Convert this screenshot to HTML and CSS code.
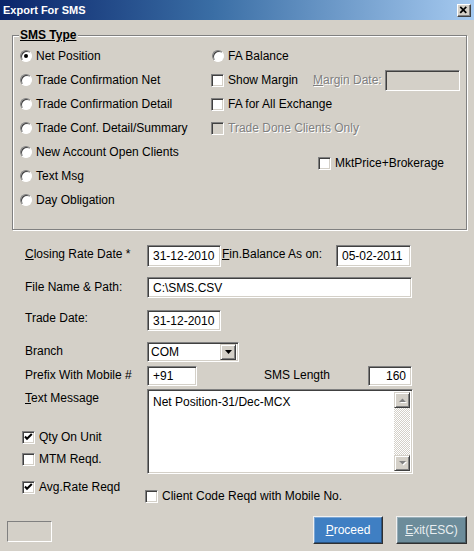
FILE: index.html
```html
<!DOCTYPE html>
<html>
<head>
<meta charset="utf-8">
<link rel="stylesheet" href="styles.css">
</head>
<body>
<div class="window">
  <div class="titlebar">
    <span class="title">Export For SMS</span>
    <span class="close"><svg width="14" height="13" viewBox="0 0 14 13"><path d="M3.5 2.5 L10 9 M10 2.5 L3.5 9" stroke="#000" stroke-width="1.8" fill="none"/></svg></span>
  </div>

  <div class="group">
    <span class="legend">SMS Type</span>
    <div class="col-left">
      <div class="opt"><span class="radio checked"></span>Net Position</div>
      <div class="opt"><span class="radio"></span>Trade Confirmation Net</div>
      <div class="opt"><span class="radio"></span>Trade Confirmation Detail</div>
      <div class="opt"><span class="radio"></span>Trade Conf. Detail/Summary</div>
      <div class="opt"><span class="radio"></span>New Account Open Clients</div>
      <div class="opt"><span class="radio"></span>Text Msg</div>
      <div class="opt"><span class="radio"></span>Day Obligation</div>
    </div>
    <div class="col-right">
      <div class="opt"><span class="radio"></span>FA Balance</div>
      <div class="opt">
        <span class="check"></span><span class="w-show">Show Margin</span>
        <span class="disabled w-mdate"><u>M</u>argin Date:</span>
        <span class="field field-off w-mfield"></span>
      </div>
      <div class="opt"><span class="check"></span>FA for All Exchange</div>
      <div class="opt"><span class="check check-off"></span><span class="disabled">Trade Done Clients Only</span></div>
      <div class="opt opt-mkt"><span class="check"></span>MktPrice+Brokerage</div>
    </div>
  </div>

  <div class="form">
    <div class="row r1">
      <span class="lbl"><u>C</u>losing Rate Date *</span>
      <span class="field w74 h22">31-12-2010</span>
      <span class="lbl lbl-fin"><u>F</u>in.Balance As on:</span>
      <span class="field w75 h22">05-02-2011</span>
    </div>
    <div class="row r2">
      <span class="lbl">File Name &amp; Path:</span>
      <span class="field w265 h21">C:\SMS.CSV</span>
    </div>
    <div class="row r3">
      <span class="lbl">Trade Date:</span>
      <span class="field w74 h21">31-12-2010</span>
    </div>
    <div class="row r4">
      <span class="lbl">Branch</span>
      <span class="field select">
        <span class="sel-text">COM</span>
        <span class="sel-btn"><svg width="7" height="4" viewBox="0 0 7 4"><path d="M0 0 H7 L3.5 4 Z" fill="#000"/></svg></span>
      </span>
    </div>
    <div class="row r5">
      <span class="lbl">Prefix With Mobile #</span>
      <span class="field w50 h20">+91</span>
      <span class="lbl lbl-len">SMS Length</span>
      <span class="field w44 h20 right">160</span>
    </div>
    <div class="row r6">
      <div class="left6">
        <span class="lbl"><u>T</u>ext Message</span>
        <div class="copt c-qty"><span class="check"><svg class="tick" width="13" height="13" viewBox="0 0 13 13"><polyline points="3,5.5 5,7.8 9.8,3" stroke="#000" stroke-width="2" fill="none"/></svg></span>Qty On Unit</div>
        <div class="copt c-mtm"><span class="check"></span>MTM Reqd.</div>
        <div class="copt c-avg"><span class="check"><svg class="tick" width="13" height="13" viewBox="0 0 13 13"><polyline points="3,5.5 5,7.8 9.8,3" stroke="#000" stroke-width="2" fill="none"/></svg></span>Avg.Rate Reqd</div>
      </div>
      <div class="right6">
        <div class="field memo">
          <div class="memo-text">Net Position-31/Dec-MCX</div>
          <div class="scroll">
            <span class="sbtn"><svg width="7" height="5" viewBox="0 0 7 5"><path d="M1 5 H8 L4.5 1.5 Z" fill="#fff"/><path d="M0 4 H7 L3.5 0.5 Z" fill="#808080"/></svg></span>
            <span class="track"></span>
            <span class="sbtn"><svg width="7" height="5" viewBox="0 0 7 5"><path d="M1 1 H8 L4.5 4.5 Z" fill="#fff"/><path d="M0 0 H7 L3.5 3.5 Z" fill="#808080"/></svg></span>
          </div>
        </div>
        <div class="copt c-client"><span class="check"></span>Client Code Reqd with Mobile No.</div>
      </div>
    </div>
  </div>

  <div class="footer">
    <span class="status"></span>
    <span class="btn btn-proceed"><u>P</u>roceed</span>
    <span class="btn btn-exit"><u>E</u>xit(ESC)</span>
  </div>
</div>
</body>
</html>
```

FILE: styles.css
```css
html, body {
  margin: 0;
  padding: 0;
  background: #d4d0c8;
}

.window {
  width: 474px;
  height: 551px;
  background: #d4d0c8;
  font-family: "Liberation Sans", Arial, sans-serif;
  font-size: 12px;
  color: #000;
  overflow: hidden;
}

.titlebar {
  height: 20px;
  display: flex;
  align-items: center;
  padding-left: 3px;
  background: linear-gradient(90deg, #0a246a 0%, #3a6ea5 45%, #a6caf0 100%);
  color: #fff;
  font-weight: bold;
  font-size: 11px;
}

.close {
  margin-left: auto;
  margin-right: 3px;
  width: 14px;
  height: 13px;
  box-sizing: border-box;
  background: #d4d0c8;
  border: 1px solid;
  border-color: #fff #404040 #404040 #fff;
  box-shadow: inset -1px -1px #808080;
  display: flex;
  align-items: center;
  justify-content: center;
  margin-top: 1px;
}
.close svg { display: block; margin-left: -1px; margin-top: -1px; }

/* group box */
.group {
  position: relative;
  margin: 15px 0 0 12px;
  width: 455px;
  height: 195px;
  box-sizing: border-box;
  border: 1px solid #808080;
  box-shadow: inset 1px 1px #fff, 1px 1px #fff;
  padding: 8px 0 0 7px;
  display: flex;
}

.legend {
  position: absolute;
  top: -8px;
  left: 6px;
  padding: 0 2px 0 1px;
  background: #d4d0c8;
  font-weight: bold;
  text-decoration: underline;
  line-height: 14px;
}

.col-left { width: 191px; flex: none; }
.col-right { flex: 1; }

.opt {
  display: flex;
  align-items: center;
  height: 24px;
  white-space: nowrap;
}

.opt-mkt {
  margin-top: 11px;
  margin-left: 107px;
}

.radio {
  position: relative;
  flex: none;
  width: 12px;
  height: 12px;
  box-sizing: border-box;
  border-radius: 50%;
  background: #fff;
  border: 1px solid;
  border-color: #808080 #fff #fff #808080;
  box-shadow: inset 1px 1px #404040;
  margin-right: 4px;
}
.col-right .radio { margin-left: 1px; margin-right: 4px; }

.radio.checked::after {
  content: "";
  position: absolute;
  left: 3px;
  top: 3px;
  width: 4px;
  height: 4px;
  border-radius: 50%;
  background: #000;
}

.check {
  position: relative;
  flex: none;
  width: 13px;
  height: 13px;
  box-sizing: border-box;
  background: #fff;
  border: 1px solid;
  border-color: #808080 #fff #fff #808080;
  box-shadow: inset 1px 1px #404040, inset -1px -1px #d4d0c8;
  margin-right: 4px;
}
.check-off { background: #d4d0c8; }

.tick {
  position: absolute;
  left: -1px;
  top: -1px;
}

.disabled {
  color: #808080;
  text-shadow: 1px 1px 0 #fff;
}

.w-show { width: 85px; }
.w-mdate { width: 72px; }

.field {
  display: flex;
  align-items: center;
  box-sizing: border-box;
  background: #fff;
  border: 1px solid;
  border-color: #808080 #fff #fff #808080;
  box-shadow: inset 1px 1px #404040, inset -1px -1px #d4d0c8;
  padding-left: 5px;
  white-space: nowrap;
  flex: none;
}
.field-off { background: #d4d0c8; }
.w-mfield { width: 75px; height: 21px; }

.w74 { width: 74px; }
.w75 { width: 75px; }
.w265 { width: 265px; }
.w50 { width: 50px; }
.w44 { width: 44px; }
.h22 { height: 22px; }
.h21 { height: 21px; }
.h20 { height: 20px; }
.right { justify-content: flex-end; padding-left: 0; padding-right: 5px; }

/* lower form */
.form {
  padding-left: 25px;
}

.row {
  display: flex;
  align-items: flex-start;
}

.lbl {
  width: 122px;
  flex: none;
  line-height: 16px;
  white-space: nowrap;
}
.lbl-fin { width: 115px; padding-left: 1px; box-sizing: border-box; }
.lbl-len { width: 104px; margin-left: 67px; padding-top: 1px; }

.r1 { margin-top: 15px; }
.r1 .lbl { padding-top: 1px; }
.r2 { margin-top: 10px; }
.r2 .lbl { padding-top: 2px; }
.r3 { margin-top: 12px; }
.r4 { margin-top: 11px; }
.r4 .lbl { padding-top: 1px; }
.r5 { margin-top: 4px; }
.r5 .lbl:first-child { padding-top: 1px; }
.r6 { margin-top: 3px; }

.select {
  width: 92px;
  height: 20px;
  padding-left: 3px;
  padding-right: 2px;
}
.sel-text { flex: 1; }
.sel-btn {
  width: 16px;
  height: 16px;
  box-sizing: border-box;
  background: #d4d0c8;
  border: 1px solid;
  border-color: #d4d0c8 #404040 #404040 #d4d0c8;
  box-shadow: inset 1px 1px #fff, inset -1px -1px #808080;
  display: flex;
  align-items: center;
  justify-content: center;
}
.sel-btn svg { display: block; }

.left6 {
  width: 122px;
  flex: none;
  display: flex;
  flex-direction: column;
}
.left6 .lbl { padding-top: 1px; }

.copt {
  display: flex;
  align-items: center;
  height: 20px;
  white-space: nowrap;
}
.copt .check { margin-right: 4px; }
.c-qty { margin-top: 21px; margin-left: -3px; }
.c-mtm { margin-top: 2px; margin-left: -3px; }
.c-avg { margin-top: 8px; margin-left: -3px; }
.c-client { margin-top: 12px; margin-left: -2px; }
.c-client .check { margin-right: 4px; }

.right6 {
  display: flex;
  flex-direction: column;
}

.memo {
  width: 266px;
  height: 85px;
  align-items: stretch;
  padding: 2px 2px 2px 5px;
}
.memo-text {
  flex: 1;
  padding-top: 2px;
  line-height: 16px;
}
.scroll {
  width: 16px;
  display: flex;
  flex-direction: column;
  background: repeating-conic-gradient(#d4d0c8 0 25%, #fff 0 50%) 0 0 / 2px 2px;
}
.sbtn {
  width: 16px;
  height: 16px;
  box-sizing: border-box;
  background: #d4d0c8;
  border: 1px solid;
  border-color: #d4d0c8 #404040 #404040 #d4d0c8;
  box-shadow: inset 1px 1px #fff, inset -1px -1px #808080;
  display: flex;
  align-items: center;
  justify-content: center;
  flex: none;
}
.sbtn svg { display: block; overflow: visible; }
.track { flex: 1; }

/* footer */
.footer {
  display: flex;
  align-items: flex-start;
  margin-top: 10px;
}

.status {
  margin-left: 7px;
  margin-top: 5px;
  width: 45px;
  height: 21px;
  box-sizing: border-box;
  border: 1px solid;
  border-color: #808080 #fff #fff #808080;
}

.btn {
  height: 28px;
  box-sizing: border-box;
  display: flex;
  align-items: center;
  justify-content: center;
  color: #fff;
  border: 1px solid;
  border-color: #f0f0f0 #303030 #303030 #f0f0f0;
  box-shadow: inset -1px -1px rgba(0,0,0,0.35), inset 1px 1px rgba(255,255,255,0.3);
}
.btn-proceed {
  margin-left: 261px;
  width: 70px;
  background: #3f7fc3;
}
.btn-exit {
  margin-left: 13px;
  width: 71px;
  background: #6c8c9a;
  color: #e8eef0;
}
```
